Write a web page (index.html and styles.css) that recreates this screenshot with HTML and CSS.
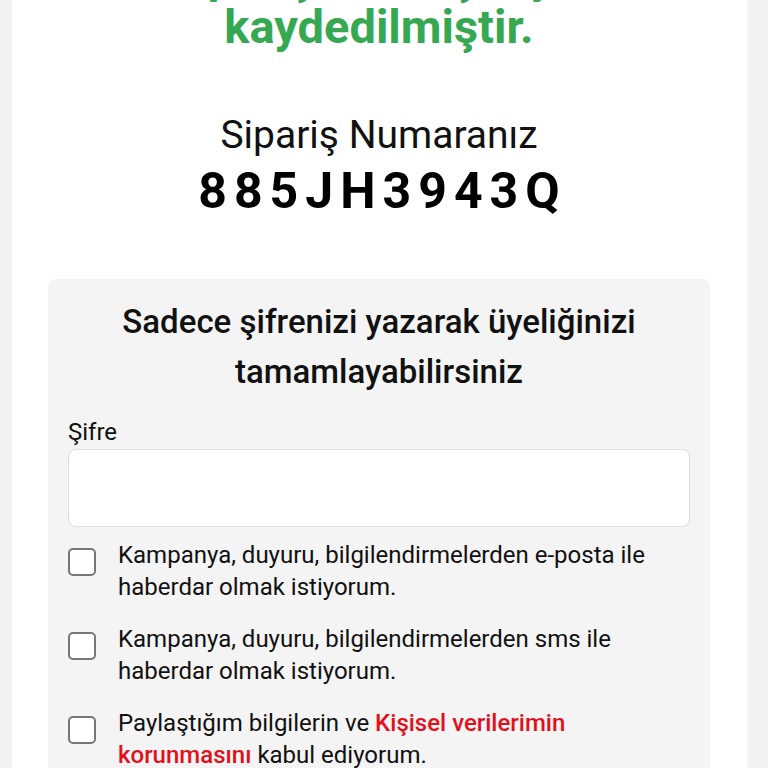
FILE: index.html
```html
<!DOCTYPE html>
<html lang="tr">
<head>
<meta charset="utf-8">
<title>Sipariş</title>
<link rel="stylesheet" href="styles.css">
</head>
<body>
<main class="page">
  <h1 class="success">Siparişiniz başarıyla<br>kaydedilmiştir.</h1>
  <div class="order">
    <div class="order-label">Sipariş Numaranız</div>
    <div class="order-no">885JH3943Q</div>
  </div>
  <section class="member">
    <h2 class="member-title">Sadece şifrenizi yazarak üyeliğinizi tamamlayabilirsiniz</h2>
    <label class="field-label" for="pw">Şifre</label>
    <input class="field" id="pw" type="password">
    <ul class="checks">
      <li class="check"><span class="box"></span><span class="check-text">Kampanya, duyuru, bilgilendirmelerden e-posta ile haberdar olmak istiyorum.</span></li>
      <li class="check"><span class="box"></span><span class="check-text">Kampanya, duyuru, bilgilendirmelerden sms ile haberdar olmak istiyorum.</span></li>
      <li class="check"><span class="box"></span><span class="check-text">Paylaştığım bilgilerin ve <a class="link" href="#">Kişisel verilerimin korunmasını</a> kabul ediyorum.</span></li>
    </ul>
  </section>
</main>
</body>
</html>
```
FILE: styles.css
```css
html, body {
  margin: 0;
  padding: 0;
  background: #f2f2f2;
  font-family: Roboto, "Liberation Sans", sans-serif;
  color: #111;
  overflow: hidden;
}
.page {
  width: 735px;
  margin-left: 12px;
  background: #fff;
  padding: 0 37px 40px 36px;
  box-sizing: border-box;
  height: 900px;
}
.success {
  margin: -48px 0 0;
  text-align: center;
  color: #36a852;
  font-size: 47px;
  line-height: 50px;
  font-weight: 700;
}
.order {
  text-align: center;
  margin-top: 61px;
}
.order-label {
  font-size: 39px;
  line-height: 44px;
  font-weight: 400;
}
.order-no {
  margin-top: 6px;
  font-size: 50px;
  line-height: 56px;
  font-weight: 700;
  letter-spacing: 7px;
  padding-left: 7px;
  color: #000;
}
.member {
  margin-top: 60px;
  background: #f4f4f4;
  border-radius: 8px;
  padding: 18px 20px 20px;
}
.member-title {
  margin: 0;
  text-align: center;
  font-size: 33px;
  line-height: 50px;
  font-weight: 500;
  padding: 0 20px;
}
.field-label {
  display: block;
  margin-top: 21px;
  font-size: 24px;
  line-height: 28px;
  font-weight: 400;
}
.field {
  display: block;
  width: 100%;
  box-sizing: border-box;
  height: 78px;
  margin-top: 3px;
  border: 1px solid #dedede;
  border-radius: 8px;
  background: #fff;
}
.checks {
  list-style: none;
  margin: 12px 0 0;
  padding: 0;
  display: flex;
  flex-direction: column;
  gap: 20px;
}
.check {
  display: flex;
  align-items: flex-start;
  gap: 22px;
}
.box {
  flex: none;
  width: 28px;
  height: 28px;
  box-sizing: border-box;
  border: 2px solid #777;
  border-radius: 5px;
  background: #fff;
  margin-top: 9px;
}
.check-text {
  font-size: 24px;
  line-height: 32px;
}
.link {
  color: #e3101b;
  font-weight: 500;
  text-decoration: none;
}
```
